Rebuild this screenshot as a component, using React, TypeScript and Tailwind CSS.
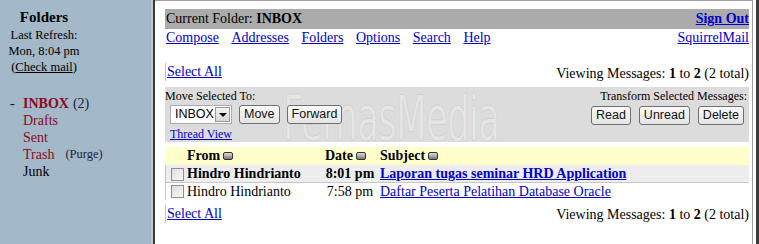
import React from "react";

const SortIcon = () => (
  <span className="inline-block w-[10px] h-[8px] rounded-[2px] border border-[#333] bg-gradient-to-b from-[#e0e0e0] to-[#7a7a7a] align-middle ml-[3px] mb-[2px]" />
);

const Checkbox = () => (
  <span className="inline-block w-[13px] h-[13px] border border-[#8e8f8f] bg-gradient-to-br from-[#dcdcdc] to-[#fbfbfb]" />
);

const Btn = ({ children }: { children: React.ReactNode }) => (
  <span className="inline-flex items-center justify-center h-[19px] px-[4px] border border-[#707070] rounded-[3px] bg-gradient-to-b from-[#fafafa] to-[#e4e4e4] font-['Liberation_Sans'] text-[12.5px] leading-none text-[#111]">
    {children}
  </span>
);

export default function App() {
  return (
    <div className="w-[759px] h-[244px] flex overflow-hidden bg-white font-['Liberation_Serif',serif] text-black">
      {/* Left frame */}
      <aside className="w-[153px] shrink-0 h-full bg-[#a3b8c8] border-r-2 border-[#c6c6c6]">
        <div className="w-[88px] text-center pt-[8px]">
          <div className="text-[15px] font-bold leading-[18px]">Folders</div>
          <div className="text-[12.5px] leading-[16px] mt-[1px]">Last Refresh:</div>
          <div className="text-[12.5px] leading-[16px]">Mon, 8:04 pm</div>
          <div className="text-[12.5px] leading-[16px]">
            (<span className="underline">Check mail</span>)
          </div>
        </div>
        <div className="mt-[20px] text-[14px] leading-[17px]">
          <div className="flex">
            <span className="w-[23px] pl-[10px]">-</span>
            <span className="font-bold text-[#8b0a1a]">INBOX</span>
            <span className="ml-[4px] text-[#1a2440]">(2)</span>
          </div>
          <div className="pl-[23px] text-[#8b0a1a]">Drafts</div>
          <div className="pl-[23px] text-[#8b0a1a]">Sent</div>
          <div className="pl-[23px] flex">
            <span className="text-[#8b0a1a]">Trash</span>
            <span className="ml-[11px] text-[12.5px] text-[#1a2440]">(Purge)</span>
          </div>
          <div className="pl-[23px]">Junk</div>
        </div>
      </aside>

      {/* Right frame */}
      <main className="flex-1 h-full border-l-2 border-r-[3px] border-[#3a3a3a] pr-[3px] bg-white">
        <div className="h-full border-t border-r border-[#a0a0a0] pl-[10px] pr-[3px] pt-[8px] relative">
          {/* header bar */}
          <div className="h-[20px] bg-[#ababab] flex items-center justify-between pl-[1px] text-[14px] leading-[20px]">
            <span>
              Current Folder: <b>INBOX</b>
            </span>
            <a className="font-bold text-[#0000cc] underline">Sign Out</a>
          </div>
          {/* nav */}
          <div className="h-[18px] flex items-center justify-between pl-[1px] text-[14px] leading-[18px] text-[#0000cc]">
            <div className="flex gap-[12.5px]">
              <a className="underline">Compose</a>
              <a className="underline">Addresses</a>
              <a className="underline">Folders</a>
              <a className="underline">Options</a>
              <a className="underline">Search</a>
              <a className="underline">Help</a>
            </div>
            <a className="underline">SquirrelMail</a>
          </div>

          {/* select all row */}
          <div className="mt-[16px] h-[20px] flex justify-between text-[14px] leading-[18px]">
            <a className="self-start border-l border-[#c0c0c0] pl-[1px] text-[#0000cc] underline">Select All</a>
            <span className="self-end">
              Viewing Messages: <b>1</b> to <b>2</b> (2 total)
            </span>
          </div>

          {/* move / transform box */}
          <div className="mt-[4px] h-[55px] bg-[#dcdcdc] relative overflow-hidden">
            <span className="absolute left-[118px] top-[9px] font-['DejaVu_Sans'] text-[62px] leading-[46px] tracking-[-1px] text-[rgba(255,255,255,0.3)] [-webkit-text-stroke:1px_rgba(150,150,150,0.22)] origin-left scale-x-[0.57] pointer-events-none select-none whitespace-nowrap">
              FernasMedia
            </span>
            <div className="relative flex justify-between h-full">
              <div className="flex flex-col">
                <div className="text-[12px] leading-[14px] mt-[2px]">Move Selected To:</div>
                <div className="flex items-center gap-[7px] ml-[5px] mt-[2px] h-[19px]">
                  <span className="flex items-center h-[19px] w-[62px] bg-white border border-[#a5acb2] pl-[4px] pr-[1px] justify-between">
                    <span className="font-['Liberation_Sans'] text-[12.5px] leading-none">INBOX</span>
                    <span className="w-[15px] h-[15px] bg-gradient-to-b from-[#f4f4f4] to-[#d6d6d6] border border-[#9a9a9a] flex items-center justify-center">
                      <span className="w-0 h-0 border-l-[4px] border-r-[4px] border-t-[4px] border-l-transparent border-r-transparent border-t-black" />
                    </span>
                  </span>
                  <Btn>Move</Btn>
                  <Btn>Forward</Btn>
                </div>
                <a className="ml-[5px] mt-[3px] text-[12px] leading-[14px] text-[#0000cc] underline">Thread View</a>
              </div>
              <div className="flex flex-col items-end pr-[2px]">
                <div className="text-[12px] leading-[14px] mt-[2px]">Transform Selected Messages:</div>
                <div className="flex items-center gap-[8px] mt-[3px] pr-[3px]">
                  <Btn>Read</Btn>
                  <Btn>Unread</Btn>
                  <Btn>Delete</Btn>
                </div>
              </div>
            </div>
          </div>

          {/* message table */}
          <div className="mt-[5px] text-[14px]">
            <div className="grid grid-cols-[22px_135px_56px_1fr] h-[18px] bg-[#ffffcc] items-center font-bold leading-[18px]">
              <span />
              <span>
                From<SortIcon />
              </span>
              <span className="pl-[3px] whitespace-nowrap">
                Date<SortIcon />
              </span>
              <span className="pl-[2px]">
                Subject<SortIcon />
              </span>
            </div>
            <div className="border-l border-[#c4c4c4]">
              <div className="grid grid-cols-[21px_135px_56px_1fr] h-[18px] bg-[#ededed] items-center font-bold leading-[18px] border-b border-[#c8c8c8]">
                <span className="pl-[5px] flex items-center">
                  <Checkbox />
                </span>
                <span className="whitespace-nowrap">Hindro Hindrianto</span>
                <span className="text-center whitespace-nowrap">8:01 pm</span>
                <a className="pl-[2px] text-[#0000cc] underline whitespace-nowrap">Laporan tugas seminar HRD Application</a>
              </div>
              <div className="grid grid-cols-[21px_135px_56px_1fr] h-[17px] items-center leading-[17px]">
                <span className="pl-[5px] flex items-center">
                  <Checkbox />
                </span>
                <span className="whitespace-nowrap">Hindro Hindrianto</span>
                <span className="text-center whitespace-nowrap">7:58 pm</span>
                <a className="pl-[2px] text-[#0000cc] underline whitespace-nowrap">Daftar Peserta Pelatihan Database Oracle</a>
              </div>
            </div>
          </div>

          {/* bottom select all */}
          <div className="mt-[5px] flex justify-between text-[14px] leading-[18px]">
            <a className="self-start border-l border-[#c0c0c0] pl-[1px] text-[#0000cc] underline">Select All</a>
            <span className="mt-[1px]">
              Viewing Messages: <b>1</b> to <b>2</b> (2 total)
            </span>
          </div>
        </div>
      </main>
    </div>
  );
}
